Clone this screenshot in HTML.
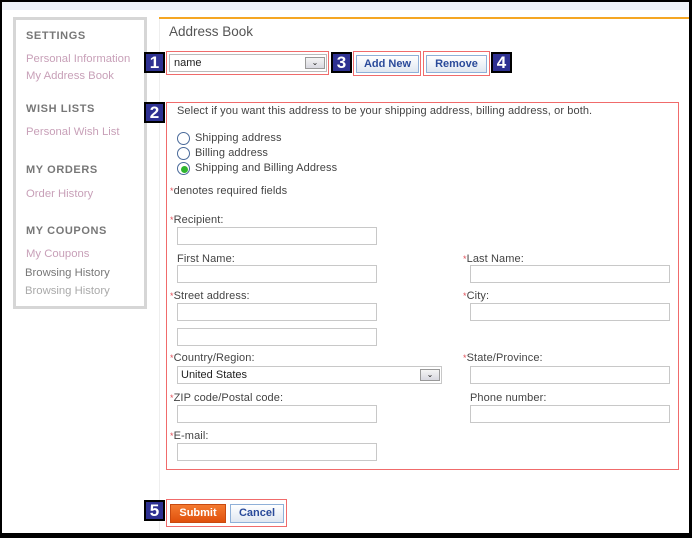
<!DOCTYPE html>
<html><head><meta charset="utf-8"><style>
*{margin:0;padding:0;box-sizing:border-box}
body{width:692px;height:538px;position:relative;overflow:hidden;background:#fff;font-family:"Liberation Sans",sans-serif;font-size:11px;color:#444}
.a{position:absolute;white-space:nowrap}
.frame{position:absolute;left:0;top:0;width:692px;height:538px;border:2px solid #000;border-right-width:3px;border-bottom-width:5px;pointer-events:none}
.side{left:13px;top:17px;width:134px;height:292px;border:3px solid #d6d6d6;background:#fff}
.h{font-weight:bold;color:#777;font-size:11px;letter-spacing:.6px}
.l{color:#c8a0b8;font-size:11.3px}
.num{position:absolute;width:21px;height:21px;background:#2e3192;border:2px solid #000;color:#fff;font-weight:bold;font-size:17px;text-align:center;line-height:17px}
.red{position:absolute;border:1px solid #f06b6b}
.in{position:absolute;height:18px;border:1px solid #c8c8c8;background:#fff}
.lab{position:absolute;font-size:11px;letter-spacing:.1px;color:#444;white-space:nowrap}
.st{color:#e0505a;font-size:9px}
.btn{position:absolute;border:1px solid #8fb0d8;background:linear-gradient(#fff,#dfe7f1);color:#2a4a9a;font-weight:bold;font-size:11px;text-align:center}
.radio{position:absolute;width:13px;height:13px;border:1px solid #4a6a9a;border-radius:50%;background:#fff}
.dd{position:absolute;width:20px;height:12px;border:1px solid #999;background:linear-gradient(#f4f4f4,#d8d8e0);font-size:8px;text-align:center;line-height:10px;color:#222}
</style></head><body>
<div class="a" style="left:2px;top:2px;width:688px;height:8px;background:#eef2f8"></div>
<div class="a side"></div>
<div class="a h" style="left:26px;top:30px">SETTINGS</div>
<div class="a l" style="left:26px;top:53px">Personal Information</div>
<div class="a l" style="left:26px;top:70px">My Address Book</div>
<div class="a h" style="left:26px;top:103px">WISH LISTS</div>
<div class="a l" style="left:26px;top:126px">Personal Wish List</div>
<div class="a h" style="left:26px;top:164px">MY ORDERS</div>
<div class="a l" style="left:26px;top:188px">Order History</div>
<div class="a h" style="left:26px;top:225px">MY COUPONS</div>
<div class="a l" style="left:26px;top:248px">My Coupons</div>
<div class="a" style="left:25px;top:267px;color:#777;font-size:11.3px">Browsing History</div>
<div class="a" style="left:25px;top:285px;color:#aaa;font-size:11.3px">Browsing History</div>

<div class="a" style="left:159px;top:17px;width:530px;height:2px;background:#f5a623"></div>
<div class="a" style="left:159px;top:19px;width:1px;height:512px;background:#eee"></div>
<div class="a" style="left:169px;top:24px;font-size:13.5px;color:#555">Address Book</div>

<div class="red" style="left:166px;top:51px;width:163px;height:24px"></div>
<div class="in" style="left:169px;top:54px;width:158px;height:18px;border-color:#bbb"></div>
<div class="a" style="left:174px;top:57px;color:#222">name</div>
<div class="dd" style="left:305px;top:57px">&#8964;</div>
<div class="num" style="left:144px;top:52px">1</div>
<div class="num" style="left:331px;top:52px">3</div>
<div class="red" style="left:353px;top:51px;width:68px;height:25px"></div>
<div class="btn" style="left:356px;top:55px;width:63px;height:18px;line-height:16px">Add New</div>
<div class="red" style="left:423px;top:51px;width:67px;height:25px"></div>
<div class="btn" style="left:426px;top:55px;width:61px;height:18px;line-height:16px">Remove</div>
<div class="num" style="left:491px;top:52px">4</div>

<div class="red" style="left:166px;top:102px;width:513px;height:368px"></div>
<div class="num" style="left:144px;top:102px">2</div>
<div class="lab" style="left:177px;top:105px">Select if you want this address to be your shipping address, billing address, or both.</div>
<div class="radio" style="left:177px;top:132px"></div><div class="lab" style="left:195px;top:132px">Shipping address</div>
<div class="radio" style="left:177px;top:147px"></div><div class="lab" style="left:195px;top:147px">Billing address</div>
<div class="radio" style="left:177px;top:162px"></div><div class="a" style="left:181px;top:166px;width:7px;height:7px;border-radius:50%;background:#2fb52f"></div><div class="lab" style="left:195px;top:162px">Shipping and Billing Address</div>
<div class="lab" style="left:170px;top:185px"><span class="st">*</span>denotes required fields</div>

<div class="lab" style="left:170px;top:214px"><span class="st">*</span>Recipient:</div>
<div class="in" style="left:177px;top:227px;width:200px"></div>
<div class="lab" style="left:177px;top:253px">First Name:</div>
<div class="in" style="left:177px;top:265px;width:200px"></div>
<div class="lab" style="left:463px;top:253px"><span class="st">*</span>Last Name:</div>
<div class="in" style="left:470px;top:265px;width:200px"></div>
<div class="lab" style="left:170px;top:290px"><span class="st">*</span>Street address:</div>
<div class="in" style="left:177px;top:303px;width:200px"></div>
<div class="in" style="left:177px;top:328px;width:200px"></div>
<div class="lab" style="left:463px;top:290px"><span class="st">*</span>City:</div>
<div class="in" style="left:470px;top:303px;width:200px"></div>
<div class="lab" style="left:170px;top:352px"><span class="st">*</span>Country/Region:</div>
<div class="in" style="left:177px;top:366px;width:265px"></div>
<div class="a" style="left:181px;top:369px;color:#222">United States</div>
<div class="dd" style="left:420px;top:369px">&#8964;</div>
<div class="lab" style="left:463px;top:352px"><span class="st">*</span>State/Province:</div>
<div class="in" style="left:470px;top:366px;width:200px"></div>
<div class="lab" style="left:170px;top:392px"><span class="st">*</span>ZIP code/Postal code:</div>
<div class="in" style="left:177px;top:405px;width:200px"></div>
<div class="lab" style="left:470px;top:392px">Phone number:</div>
<div class="in" style="left:470px;top:405px;width:200px"></div>
<div class="lab" style="left:170px;top:430px"><span class="st">*</span>E-mail:</div>
<div class="in" style="left:177px;top:443px;width:200px"></div>

<div class="num" style="left:144px;top:500px">5</div>
<div class="red" style="left:166px;top:499px;width:121px;height:28px"></div>
<div class="a" style="left:170px;top:504px;width:56px;height:19px;background:linear-gradient(#f47a30,#e0500c);border:1px solid #c84a10;color:#fff;font-weight:bold;font-size:11px;text-align:center;line-height:17px">Submit</div>
<div class="btn" style="left:230px;top:504px;width:54px;height:19px;line-height:17px">Cancel</div>
<div class="frame"></div>
</body></html>
